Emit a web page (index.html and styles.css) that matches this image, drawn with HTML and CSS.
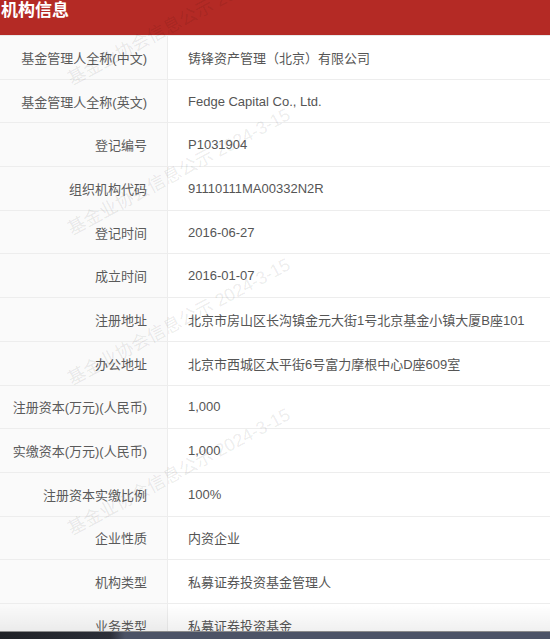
FILE: index.html
```html
<!DOCTYPE html>
<html lang="zh-CN">
<head>
  <meta charset="UTF-8">
  <meta name="viewport" content="width=device-width, initial-scale=1.0">
  <title>机构信息</title>
  <link rel="stylesheet" href="styles.css">
</head>
<body>
<div class="screen">
  <div class="page">
    <h2 class="section-title">机构信息</h2>

    <div class="info-table">
      <div class="info-row"><div class="info-label">基金管理人全称(中文)</div><div class="info-value">铸锋资产管理（北京）有限公司</div></div>
      <div class="info-row"><div class="info-label">基金管理人全称(英文)</div><div class="info-value">Fedge Capital Co., Ltd.</div></div>
      <div class="info-row"><div class="info-label">登记编号</div><div class="info-value">P1031904</div></div>
      <div class="info-row"><div class="info-label">组织机构代码</div><div class="info-value">91110111MA00332N2R</div></div>
      <div class="info-row"><div class="info-label">登记时间</div><div class="info-value">2016-06-27</div></div>
      <div class="info-row"><div class="info-label">成立时间</div><div class="info-value">2016-01-07</div></div>
      <div class="info-row"><div class="info-label">注册地址</div><div class="info-value">北京市房山区长沟镇金元大街1号北京基金小镇大厦B座101</div></div>
      <div class="info-row"><div class="info-label">办公地址</div><div class="info-value">北京市西城区太平街6号富力摩根中心D座609室</div></div>
      <div class="info-row"><div class="info-label">注册资本(万元)(人民币)</div><div class="info-value">1,000</div></div>
      <div class="info-row"><div class="info-label">实缴资本(万元)(人民币)</div><div class="info-value">1,000</div></div>
      <div class="info-row"><div class="info-label">注册资本实缴比例</div><div class="info-value">100%</div></div>
      <div class="info-row"><div class="info-label">企业性质</div><div class="info-value">内资企业</div></div>
      <div class="info-row"><div class="info-label">机构类型</div><div class="info-value">私募证券投资基金管理人</div></div>
      <div class="info-row"><div class="info-label">业务类型</div><div class="info-value">私募证券投资基金</div></div>
    </div>

    <!-- watermark -->
    <div class="watermarks">
      <span class="wm wm-1">基金业协会信息公示 2024-3-15</span>
      <span class="wm wm-2">基金业协会信息公示 2024-3-15</span>
      <span class="wm wm-3">基金业协会信息公示 2024-3-15</span>
      <span class="wm wm-4">基金业协会信息公示 2024-3-15</span>
    </div>
  </div>
  <div class="dock"></div>
</div>
</body>
</html>
```

FILE: styles.css
```css
html, body {
  margin: 0;
  padding: 0;
  height: 100%;
}

body {
  background: #fff;
  font-family: "Liberation Sans", "Noto Sans CJK SC", sans-serif;
  color: #555;
  overflow: hidden;
}

.screen {
  height: 639px;
  display: flex;
  flex-direction: column;
}

.page {
  flex: 1;
  position: relative;
  overflow: hidden;
}
.page:after {
  content: "";
  position: absolute;
  left: 0;
  right: 0;
  bottom: 0;
  height: 26px;
  background: linear-gradient(rgba(0, 0, 0, 0), rgba(0, 0, 0, 0.06));
}

.section-title {
  margin: 0;
  height: 34px;
  padding: 1px 0 0 1px;
  background: #b42a25;
  color: #fff;
  font-size: 17px;
  line-height: 20px;
  font-weight: bold;
  border-bottom: 1px solid #e8e8e8;
}

.info-row {
  display: grid;
  grid-template-columns: 168px 1fr;
  height: 43.7px;
  box-sizing: border-box;
  border-bottom: 1px solid #ededed;
  font-size: 13px;
}

.info-label, .info-value {
  display: flex;
  align-items: center;
  white-space: nowrap;
}

.info-label {
  justify-content: flex-end;
  padding-right: 20px;
  background: #fafafa;
  border-right: 1px solid #ededed;
  color: #5a5a5a;
}

.info-value {
  padding-left: 20px;
  color: #555;
}

.watermarks {
  position: absolute;
  inset: 0;
  pointer-events: none;
}

.wm {
  position: absolute;
  left: 178px;
  white-space: nowrap;
  font-size: 18px;
  color: rgba(0, 0, 0, 0.085);
  transform: translate(-50%, -50%) rotate(-28deg);
}
.wm-1 { top: 20px; }
.wm-2 { top: 170px; }
.wm-3 { top: 320px; }
.wm-4 { top: 470px; }

.dock {
  height: 7px;
  border-top: 1px solid #8a8a8a;
  background: linear-gradient(90deg, #1f2126 0, #2c2f38 110px, #4c5366 125px, #4c5366 100%);
}
```
